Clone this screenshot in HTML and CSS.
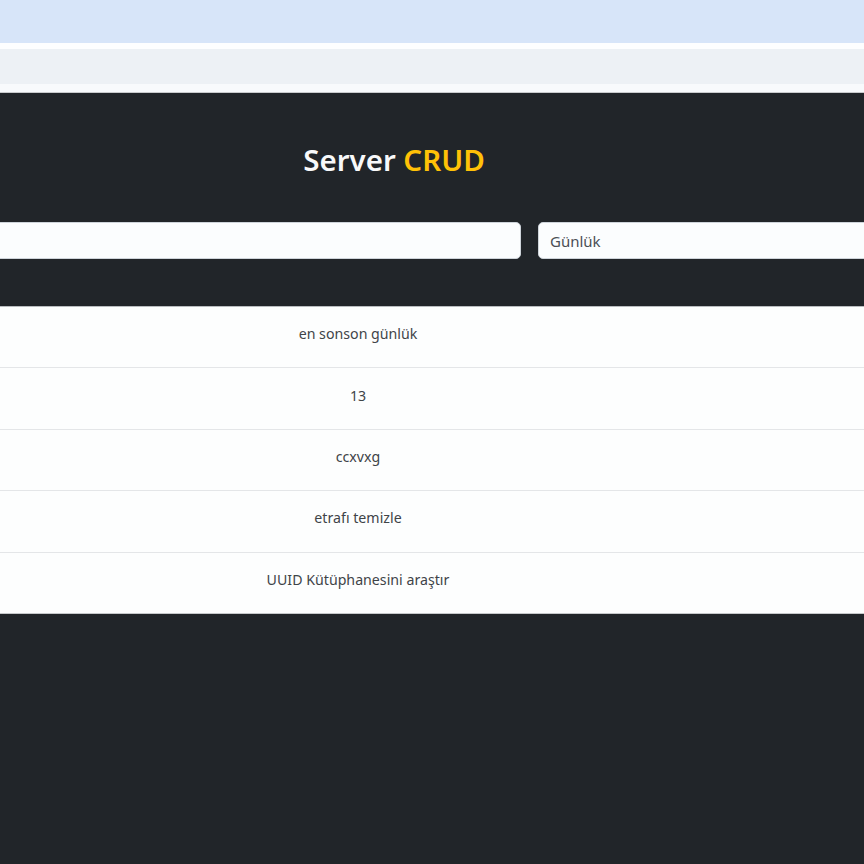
FILE: index.html
```html
<!DOCTYPE html>
<html lang="tr">
<head>
<meta charset="utf-8">
<title>Server CRUD</title>
<link rel="stylesheet" href="styles.css">
</head>
<body>
<div class="browser-top"></div>
<div class="browser-gap"></div>
<div class="browser-bar"></div>
<div class="browser-edge"></div>
<main class="app">
  <h1 class="title">Server <span class="accent">CRUD</span></h1>
  <div class="form-row">
    <input class="field field-a" type="text">
    <input class="field field-b" type="text" placeholder="Günlük">
  </div>
  <div class="table">
    <div class="row"><span class="cell">en sonson günlük</span></div>
    <div class="row"><span class="cell">13</span></div>
    <div class="row"><span class="cell">ccxvxg</span></div>
    <div class="row"><span class="cell">etrafı temizle</span></div>
    <div class="row"><span class="cell">UUID Kütüphanesini araştır</span></div>
  </div>
</main>
</body>
</html>
```
FILE: styles.css
```css
html, body {
  margin: 0;
  padding: 0;
  background: #212529;
  font-family: "Noto Sans", "Open Sans", sans-serif;
  overflow: hidden;
}
.browser-top { height: 43px; background: #d7e5f9; }
.browser-gap { height: 6px; background: #fdfeff; }
.browser-bar { height: 35px; background: #edf1f5; }
.browser-edge { height: 8px; background: #f8fafc; border-bottom: 1px solid #c9cbcd; }
.app {
  background: #212529;
  min-height: 771px;
}
.title {
  margin: 0;
  padding-top: 48px;
  padding-right: 76px;
  height: 83px;
  box-sizing: border-box;
  text-align: center;
  color: #f8f9fa;
  font-size: 29.5px;
  font-weight: 600;
  line-height: 37px;
}
.accent { color: #ffc107; }
.form-row {
  display: grid;
  grid-template-columns: 531px 336px;
  gap: 17px;
  margin-left: -10px;
  margin-top: 46px;
}
.field {
  height: 37px;
  box-sizing: border-box;
  border: 1px solid #ced4da;
  border-radius: 5px;
  background: #fbfdfe;
  font-family: inherit;
  font-size: 15px;
  padding: 0 11px;
  color: #495057;
  outline: none;
}
.field::placeholder { color: #4a4f55; }
.table {
  margin-top: 47px;
  background: #fdfefe;
  border-top: 1px solid #b9bcbf;
}
.row {
  height: 61.4px;
  box-sizing: border-box;
  display: flex;
  align-items: center;
  justify-content: center;
  border-bottom: 1px solid #e4e6e8;
  padding-right: 148px;
  padding-bottom: 7px;
}
.row:last-child { border-bottom: 1px solid #c6c8ca; }
.cell {
  color: #3f4448;
  font-size: 14.2px;
}
```
